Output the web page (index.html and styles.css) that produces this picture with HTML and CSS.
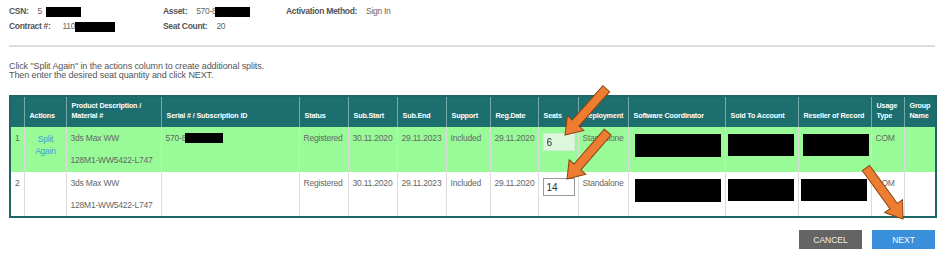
FILE: index.html
```html
<!DOCTYPE html>
<html lang="en">
<head>
    <meta charset="UTF-8">
    <title>Split Seats</title>
    <link rel="stylesheet" href="styles.css">
</head>
<body>
    <main class="page">
        <section class="summary">
            <div class="field"><b>CSN:</b><span>5</span><i class="redact csn"></i></div>
            <div class="field"><b>Asset:</b><span>570-8</span><i class="redact asset"></i></div>
            <div class="field"><b>Activation Method:</b><span>Sign In</span></div>
            <div class="field"><b>Contract #:</b><span class="far">110</span><i class="redact contract"></i></div>
            <div class="field"><b>Seat Count:</b><span>20</span></div>
        </section>
        <hr class="divider">
        <p class="hint">Click "Split Again" in the actions column to create additional splits.<br>Then enter the desired seat quantity and click NEXT.</p>

        <table class="seats">
            <colgroup>
                <col style="width:14px"><col style="width:42px"><col style="width:95px"><col style="width:138px">
                <col style="width:49px"><col style="width:49px"><col style="width:49px"><col style="width:44px">
                <col style="width:48px"><col style="width:40px"><col style="width:50px"><col style="width:97px">
                <col style="width:73px"><col style="width:73px"><col style="width:33px"><col style="width:32px">
            </colgroup>
            <thead>
                <tr>
                    <th></th>
                    <th>Actions</th>
                    <th>Product Description /<br>Material #</th>
                    <th>Serial # / Subscription ID</th>
                    <th>Status</th>
                    <th>Sub.Start</th>
                    <th>Sub.End</th>
                    <th>Support</th>
                    <th>Reg.Date</th>
                    <th>Seats</th>
                    <th>Deployment</th>
                    <th>Software Coordinator</th>
                    <th>Sold To Account</th>
                    <th>Reseller of Record</th>
                    <th>Usage<br>Type</th>
                    <th>Group<br>Name</th>
                </tr>
            </thead>
            <tbody>
                <tr class="active">
                    <td>1</td>
                    <td class="action"><a href="#">Split<br>Again</a></td>
                    <td><div>3ds Max WW</div><div class="material">128M1-WW5422-L747</div></td>
                    <td>570-8<i class="redact serial"></i></td>
                    <td>Registered</td>
                    <td>30.11.2020</td>
                    <td>29.11.2023</td>
                    <td>Included</td>
                    <td>29.11.2020</td>
                    <td><input class="qty" type="text" value="6"></td>
                    <td>Standalone</td>
                    <td><i class="redact wide"></i></td>
                    <td><i class="redact mid sold"></i></td>
                    <td><i class="redact mid"></i></td>
                    <td>COM</td>
                    <td></td>
                </tr>
                <tr>
                    <td>2</td>
                    <td></td>
                    <td><div>3ds Max WW</div><div class="material">128M1-WW5422-L747</div></td>
                    <td></td>
                    <td>Registered</td>
                    <td>30.11.2020</td>
                    <td>29.11.2023</td>
                    <td>Included</td>
                    <td>29.11.2020</td>
                    <td><input class="qty" type="text" value="14"></td>
                    <td>Standalone</td>
                    <td><i class="redact wide"></i></td>
                    <td><i class="redact mid sold"></i></td>
                    <td><i class="redact mid reseller"></i></td>
                    <td>COM</td>
                    <td></td>
                </tr>
            </tbody>
        </table>

        <div class="buttons">
            <button class="btn cancel">CANCEL</button>
            <button class="btn next">NEXT</button>
        </div>
    </main>

    <svg class="arrows" width="944" height="256" viewBox="0 0 944 256">
        <g transform="translate(565 135) rotate(131.7)">
            <polygon points="0,0 -16,-11 -16,-4.5 -62,-4.5 -62,4.5 -16,4.5 -16,11"/>
        </g>
        <g transform="translate(567 179) rotate(131)">
            <polygon points="0,0 -16,-11 -16,-4.5 -62,-4.5 -62,4.5 -16,4.5 -16,11"/>
        </g>
        <g transform="translate(903 219) rotate(54)">
            <polygon points="0,0 -16,-11 -16,-4.5 -63,-4.5 -63,4.5 -16,4.5 -16,11"/>
        </g>
    </svg>
</body>
</html>
```

FILE: styles.css
```css
body {
    margin: 0;
    position: relative;
    font-family: "Liberation Sans", Arial, sans-serif;
    font-size: 8.5px;
    letter-spacing: -0.2px;
    color: #666;
    background: #fff;
}
.page {
    padding: 6px 9px 0;
}
.summary {
    display: grid;
    grid-template-columns: 154px 123px auto;
    row-gap: 4px;
    line-height: 11px;
    letter-spacing: -0.3px;
}
.field {
    display: flex;
    align-items: center;
    gap: 9px;
}
.field b {
    color: #555;
}
.field .far {
    margin-left: 3px;
}
.redact {
    display: inline-block;
    background: #000;
}
.field .redact {
    height: 10px;
}
.redact.csn { width: 35px; margin-left: -5px; }
.redact.contract { width: 40px; margin-left: -9px; }
.redact.asset { width: 35px; margin-left: -10px; }
.divider {
    border: none;
    height: 2px;
    background: #dcdcdc;
    margin: 13px 0 0;
}
.hint {
    margin: 15px 0 0;
    font-size: 9px;
    letter-spacing: -0.1px;
    line-height: 9px;
    color: #555;
}
.seats {
    margin-top: 15px;
    width: 926px;
    table-layout: fixed;
    border-collapse: collapse;
    border: 2px solid #1d6767;
}
.seats th {
    background: #1d6f6f;
    color: #fff;
    text-align: left;
    font-size: 7.2px;
    font-weight: bold;
    letter-spacing: -0.15px;
    vertical-align: bottom;
    padding: 4px 3px 6px 5px;
    height: 20px;
    line-height: 10px;
    border-left: 1px solid #78a8a8;
    white-space: nowrap;
}
.seats th:first-child,
.seats td:first-child {
    border-left: none;
}
.seats td {
    vertical-align: top;
    padding: 6px 3px 0 4px;
    height: 38px;
    line-height: 11px;
    border-left: 1px solid #dcdcdc;
    white-space: nowrap;
    overflow: hidden;
}
.seats tbody tr:first-child td {
    height: 39px;
}
.seats tr.active td {
    background: #98fb98;
}
.seats td.action {
    text-align: center;
    line-height: 12px;
}
.action a {
    color: #3fa0d6;
    text-decoration: none;
}
.material {
    margin-top: 11px;
}
.redact.serial {
    width: 38px;
    height: 10px;
    margin-left: -1px;
    vertical-align: top;
    margin-top: 0;
}
.redact.wide,
.redact.mid {
    display: block;
    margin-top: 1px;
}
.redact.wide {
    width: 86px;
    height: 23px;
    margin-left: 2px;
}
.redact.mid {
    width: 66px;
    height: 22px;
}
.redact.sold {
    margin-left: -2px;
}
.redact.reseller {
    margin-left: -2px;
}
.qty {
    box-sizing: border-box;
    width: 32px;
    height: 18px;
    margin: 0;
    padding: 0 3px;
    border: 1px solid #999;
    font-family: "Liberation Sans", Arial, sans-serif;
    font-size: 10px;
    color: #333;
    background: #fff;
}
.active .qty {
    border-color: #d4ecd4;
    background: #dcf8dc;
}
.buttons {
    display: flex;
    justify-content: flex-end;
    gap: 10px;
    margin-top: 12px;
}
.btn {
    width: 63px;
    height: 19px;
    border: none;
    font-family: "Liberation Sans", Arial, sans-serif;
    font-size: 8.5px;
    color: #fff;
    padding: 0;
}
.btn.cancel {
    background: #646464;
    color: #eee;
}
.btn.next {
    background: #3a8fdb;
}
.arrows {
    position: absolute;
    top: 0;
    left: 0;
    pointer-events: none;
}
.arrows polygon {
    fill: #ed7d31;
    stroke: #8a4310;
    stroke-width: 1;
    stroke-linejoin: miter;
}
```
